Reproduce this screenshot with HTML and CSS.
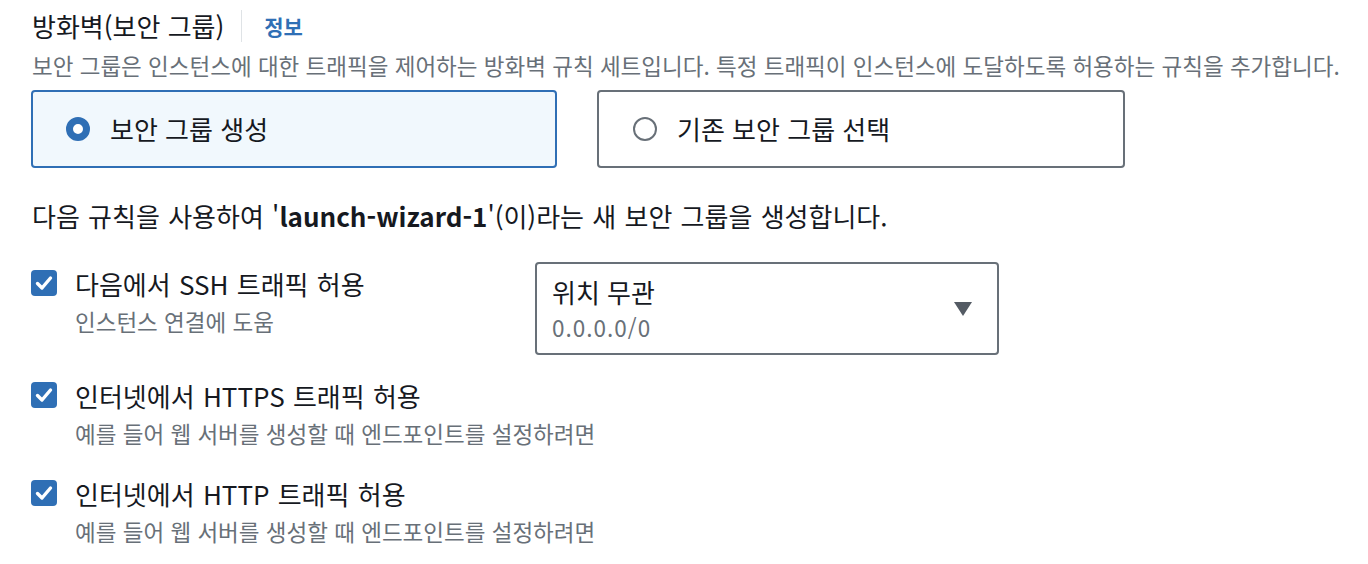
FILE: index.html
```html
<!DOCTYPE html>
<html lang="ko">
<head>
<meta charset="utf-8">
<link rel="stylesheet" href="styles.css">
</head>
<body>
<div class="page">
  <div class="header">
    <h2 class="title">방화벽(보안 그룹)</h2>
    <span class="divider"></span>
    <a class="info">정보</a>
  </div>
  <p class="desc">보안 그룹은 인스턴스에 대한 트래픽을 제어하는 방화벽 규칙 세트입니다. 특정 트래픽이 인스턴스에 도달하도록 허용하는 규칙을 추가합니다.</p>

  <div class="tiles">
    <div class="tile tile-selected">
      <span class="radio radio-on"></span>
      <span class="tile-label">보안 그룹 생성</span>
    </div>
    <div class="tile">
      <span class="radio"></span>
      <span class="tile-label">기존 보안 그룹 선택</span>
    </div>
  </div>

  <p class="statement">다음 규칙을 사용하여 '<b>launch-wizard-1</b>'(이)라는 새 보안 그룹을 생성합니다.</p>

  <div class="rule rule-first">
    <div class="check-item">
      <span class="checkbox"><svg viewBox="0 0 26 26" width="26" height="26"><path d="M6.5 13.5 L11 18 L19.5 8" fill="none" stroke="#fff" stroke-width="3.4" stroke-linecap="round" stroke-linejoin="round"/></svg></span>
      <div class="check-text">
        <div class="check-label">다음에서 SSH 트래픽 허용</div>
        <div class="check-sub">인스턴스 연결에 도움</div>
      </div>
    </div>
    <div class="select">
      <div class="select-text">
        <div class="select-main">위치 무관</div>
        <div class="select-sub">0.0.0.0/0</div>
      </div>
      <span class="caret"></span>
    </div>
  </div>

  <div class="rule">
    <div class="check-item">
      <span class="checkbox"><svg viewBox="0 0 26 26" width="26" height="26"><path d="M6.5 13.5 L11 18 L19.5 8" fill="none" stroke="#fff" stroke-width="3.4" stroke-linecap="round" stroke-linejoin="round"/></svg></span>
      <div class="check-text">
        <div class="check-label">인터넷에서 HTTPS 트래픽 허용</div>
        <div class="check-sub">예를 들어 웹 서버를 생성할 때 엔드포인트를 설정하려면</div>
      </div>
    </div>
  </div>

  <div class="rule">
    <div class="check-item">
      <span class="checkbox"><svg viewBox="0 0 26 26" width="26" height="26"><path d="M6.5 13.5 L11 18 L19.5 8" fill="none" stroke="#fff" stroke-width="3.4" stroke-linecap="round" stroke-linejoin="round"/></svg></span>
      <div class="check-text">
        <div class="check-label">인터넷에서 HTTP 트래픽 허용</div>
        <div class="check-sub">예를 들어 웹 서버를 생성할 때 엔드포인트를 설정하려면</div>
      </div>
    </div>
  </div>
</div>
</body>
</html>
```

FILE: styles.css
```css
* { box-sizing: border-box; }
html, body { margin: 0; padding: 0; background: #fff; }
body {
  font-family: "Noto Sans CJK KR", "Noto Sans", "Open Sans", sans-serif;
  color: #16191f;
}
.page { padding: 9px 0 0 32px; }

.header { display: flex; align-items: center; height: 34px; }
.title { margin: 0; font-size: 26px; font-weight: 400; line-height: 34px; }
.divider { width: 1px; height: 32px; background: #dfe3e6; margin: 0 22px 0 17px; }
.info { font-size: 21px; font-weight: 700; color: #2f6fb5; line-height: 34px; }

.desc { margin: 7px 0 0; font-size: 22.5px; line-height: 30px; color: #687078; white-space: nowrap; }

.tiles { display: grid; grid-template-columns: 526px 528px; gap: 40px; margin: 10px 0 0 -1px; }
.tile {
  display: flex; align-items: center; height: 78px;
  border: 2px solid #687078; border-radius: 4px; padding-left: 34px;
}
.tile-selected { border-color: #2f6fb5; background: #f1f8fd; padding-left: 33px; }
.radio {
  width: 24px; height: 24px; border-radius: 50%;
  border: 2px solid #687078; background: #fff; flex: none;
}
.radio-on { border: 7px solid #2f6fb5; }
.tile-label { font-size: 26px; line-height: 34px; margin-left: 20px; }

.statement { margin: 31px 0 0; font-size: 26px; line-height: 34px; white-space: nowrap; word-spacing: 1px; }
.statement b { font-weight: 700; }

.rule { display: flex; align-items: flex-start; margin-top: 29px; }
.rule-first + .rule { margin-top: 24px; }
.check-item { display: flex; align-items: flex-start; width: 503px; flex: none; }
.checkbox {
  width: 26px; height: 26px; border-radius: 4px; background: #2f6fb5;
  flex: none; margin-top: 8px; margin-left: -1px; display: block;
}
.rule .checkbox { margin-top: 3px; }
.rule-first .checkbox { margin-top: 8px; }
.checkbox svg { display: block; }
.check-text { margin-left: 18px; white-space: nowrap; }
.rule-first .check-text { padding-top: 5px; }
.check-label { font-size: 26px; line-height: 34px; word-spacing: 1px; }
.check-sub { font-size: 22.5px; line-height: 30px; color: #687078; margin-top: 5px; }

.select {
  width: 464px; height: 93px; border: 2px solid #687078; border-radius: 4px;
  display: flex; align-items: center; justify-content: space-between;
  padding: 0 25px 0 15px; flex: none;
}
.select-main { font-size: 26px; line-height: 34px; }
.select-sub { font-size: 22.5px; line-height: 30px; color: #687078; margin-top: 3px; letter-spacing: 1px; }
.caret {
  width: 0; height: 0;
  border-left: 9px solid transparent; border-right: 9px solid transparent;
  border-top: 14px solid #545b64;
}
```
